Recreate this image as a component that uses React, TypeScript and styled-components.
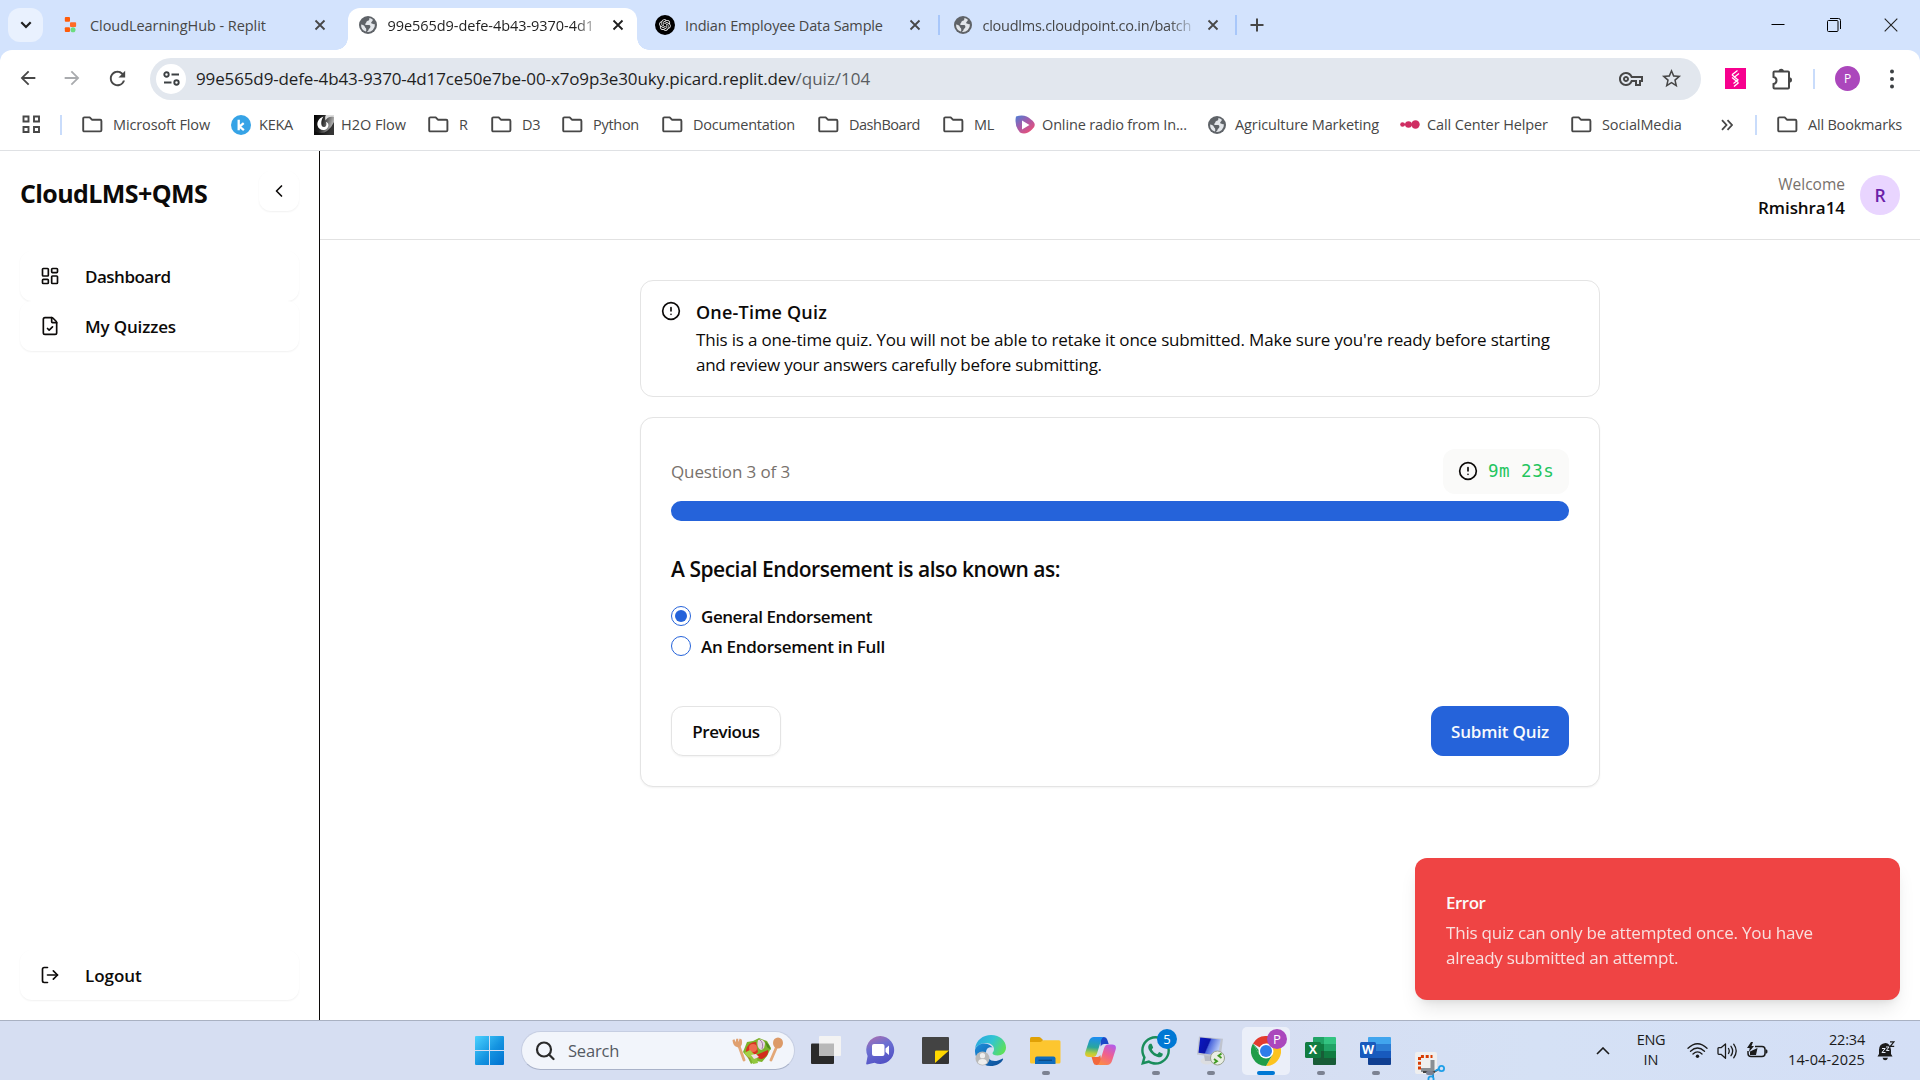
import React from "react";
import styled, { createGlobalStyle, css } from "styled-components";
import { LayoutDashboard, FileCheck, LogOut, ChevronLeft, CircleAlert } from "lucide-react";
import { RiOpenaiFill } from "react-icons/ri";
import { FaWhatsapp } from "react-icons/fa";
import { MdArrowBack, MdArrowForward, MdRefresh, MdOutlineVpnKey, MdStarBorder } from "react-icons/md";

const GlobalStyle = createGlobalStyle`
  *, *::before, *::after { box-sizing: border-box; }
  html, body { margin: 0; padding: 0; }
  body {
    font-family: "Open Sans", "Noto Sans", sans-serif;
    color: #0c0a09;
    background: #fff;
    overflow: hidden;
  }
  svg { display: block; flex: none; }
  button { font: inherit; color: inherit; border: 0; background: none; padding: 0; }
`;

const Screen = styled.div`
  width: 1920px;
  height: 1080px;
  display: flex;
  flex-direction: column;
  overflow: hidden;
`;

const Label = styled.span<{ $track?: number }>`
  white-space: nowrap;
  letter-spacing: ${(p) => p.$track ?? 0}px;
`;

/* ---------- browser chrome ---------- */

const TabStrip = styled.div`
  height: 50px;
  display: flex;
  align-items: flex-start;
  padding: 8px 0 0 8px;
  background: #d3e3fd;
`;

const TabSearch = styled.button`
  width: 35px;
  height: 34px;
  border-radius: 12px;
  background: #e9f1fe;
  display: grid;
  place-items: center;
  margin-right: 7.5px;
`;

const Tab = styled.div<{ $active?: boolean }>`
  position: relative;
  width: 289px;
  height: 42px;
  padding: 0 0 8px 9.5px;
  display: grid;
  grid-template-columns: 20px 211px 15px;
  column-gap: 10px;
  align-items: center;
  font-size: 14.5px;
  color: #474747;
  ${(p) =>
    p.$active &&
    css`
      background: #fff;
      color: #1f1f1f;
      border-radius: 12px 12px 0 0;
      &::before,
      &::after {
        content: "";
        position: absolute;
        bottom: 0;
        width: 12px;
        height: 12px;
      }
      &::before {
        left: -12px;
        background: radial-gradient(circle at 0 0, transparent 11.5px, #fff 12px);
      }
      &::after {
        right: -12px;
        background: radial-gradient(circle at 100% 0, transparent 11.5px, #fff 12px);
      }
    `}
  & > svg {
    justify-self: center;
  }
  & > svg:last-child {
    justify-self: end;
  }
`;

const TabTitle = styled(Label)<{ $fade?: boolean }>`
  overflow: hidden;
  ${(p) => p.$fade && css`mask-image: linear-gradient(90deg, #000 186px, rgba(0, 0, 0, 0.15) 211px);`}
`;

const TabGap = styled.div<{ $bar?: boolean }>`
  width: 8.5px;
  height: 34px;
  display: grid;
  place-items: center;
  &::before {
    content: "";
    width: 2px;
    height: 20px;
    background: ${(p) => (p.$bar ? "#a8c7fa" : "transparent")};
  }
`;

const NewTab = styled.button`
  margin-left: 6.5px;
  width: 20px;
  height: 34px;
  display: grid;
  place-items: center;
`;

const WindowControls = styled.div`
  margin-left: auto;
  height: 34px;
  display: grid;
  grid-template-columns: 57px 56px 58px;
  justify-items: center;
  align-items: center;
`;

const ToolbarBack = styled.div`
  background: #d3e3fd;
`;

const Toolbar = styled.div`
  height: 57px;
  background: #fff;
  border-radius: 12px 12px 0 0;
  display: flex;
  align-items: center;
  padding: 0 18px 0 17px;
  color: #474747;
`;

const NavButtons = styled.div`
  width: 133px;
  display: grid;
  grid-template-columns: 44px 45px 44px;
`;

const AddressBar = styled.div`
  width: 1551px;
  height: 42px;
  border-radius: 21px;
  background: #e2e7ee;
  display: flex;
  align-items: center;
  padding: 0 18px 0 6px;
  font-size: 17px;
  color: #1f1f1f;
  em {
    font-style: normal;
    color: #5a5d61;
    letter-spacing: 0;
  }
`;

const SiteInfo = styled.div`
  width: 30px;
  height: 30px;
  border-radius: 50%;
  background: #fff;
  display: grid;
  place-items: center;
  margin-right: 10px;
`;

const AddressActions = styled.div`
  margin-left: auto;
  display: flex;
  align-items: center;
  gap: 17px;
  color: #474747;
`;

const ExtensionRow = styled.div`
  flex: 1;
  display: flex;
  align-items: center;
  padding-left: 24px;
`;

const ExtensionButton = styled.button`
  margin: 0 20px 0 25px;
`;

const ProfileDot = styled.div`
  width: 25px;
  height: 25px;
  border-radius: 50%;
  background: #ab47bc;
  color: #fff;
  font-size: 12px;
  display: grid;
  place-items: center;
  margin: 0 29px 0 20px;
`;

const VBar = styled.i<{ $ml?: number; $mr?: number }>`
  width: 2px;
  height: 20px;
  background: #c9dcfb;
  margin-left: ${(p) => p.$ml ?? 0}px;
  margin-right: ${(p) => p.$mr ?? 0}px;
`;

const Bookmarks = styled.div`
  height: 44px;
  border-bottom: 1px solid #dfe1e4;
  display: flex;
  align-items: center;
  padding: 0 0 8px 22px;
  font-size: 14.5px;
  color: #474747;
  span {
    position: relative;
    top: -0.5px;
  }
`;

const Bookmark = styled.div<{ $slot: number; $gap?: number }>`
  width: ${(p) => p.$slot}px;
  display: flex;
  align-items: center;
  gap: ${(p) => p.$gap ?? 10}px;
`;

/* ---------- quiz application ---------- */

const AppFrame = styled.div`
  height: 869px;
  display: flex;
`;

const Sidebar = styled.aside`
  width: 320px;
  border-right: 1px solid #0c0a09;
  padding: 20px 20px 20px;
  display: flex;
  flex-direction: column;
`;

const Brand = styled.div`
  display: flex;
  justify-content: space-between;
  height: 40px;
  h1 {
    margin: 5px 0 0;
    font-size: 25px;
    line-height: 34px;
    font-weight: 700;
  }
`;

const ghost = css`
  border-radius: 12px;
  background: #fff;
  box-shadow: 0 1px 2px rgba(0, 0, 0, 0.06);
`;

const Collapse = styled.button`
  ${ghost}
  width: 40px;
  height: 40px;
  display: grid;
  place-items: center;
`;

const Nav = styled.nav`
  margin-top: 40px;
  flex: 1;
`;

const NavItem = styled.button`
  ${ghost}
  width: 279px;
  height: 50px;
  display: flex;
  align-items: center;
  gap: 25px;
  padding: 1px 0 0 20px;
  font-size: 17px;
  font-weight: 600;
  svg {
    margin-bottom: 1px;
  }
`;

const Main = styled.main`
  flex: 1;
  display: flex;
  flex-direction: column;
`;

const Header = styled.header`
  height: 89px;
  border-bottom: 1px solid #e2e2e2;
  display: flex;
  justify-content: flex-end;
  align-items: center;
  gap: 15px;
  padding: 0 20px 0 0;
`;

const Who = styled.div`
  display: flex;
  flex-direction: column;
  align-items: flex-end;
  padding-top: 2px;
  font-size: 17px;
  line-height: 24px;
  font-weight: 600;
  small {
    font-size: 15.5px;
    font-weight: 400;
    color: #78716c;
  }
`;

const Avatar = styled.div`
  width: 40px;
  height: 40px;
  border-radius: 50%;
  background: #e9d5ff;
  color: #6b21a8;
  display: grid;
  place-items: center;
  font-size: 17.5px;
  font-weight: 600;
`;

const Content = styled.section`
  width: 960px;
  margin: 40px 0 0 320px;
  display: flex;
  flex-direction: column;
  gap: 20px;
`;

const card = css`
  border: 1px solid #e4e4e4;
  border-radius: 13px;
  background: #fff;
`;

const Notice = styled.div`
  ${card}
  height: 117px;
  display: flex;
  gap: 15px;
  padding: 20px;
  h5 {
    margin: -1px 0 0;
    font-size: 18px;
    line-height: 24px;
    font-weight: 600;
  }
  p {
    margin: 3px 0 0;
    font-size: 17px;
    line-height: 25px;
  }
`;

const QuizCard = styled.div`
  ${card}
  height: 370px;
  padding: 30px;
  box-shadow: 0 1px 2px rgba(0, 0, 0, 0.05);
  display: flex;
  flex-direction: column;
`;

const ProgressRow = styled.div`
  display: flex;
  justify-content: space-between;
  align-items: center;
  height: 46px;
  font-size: 17px;
  color: #78716c;
`;

const Timer = styled.div`
  width: 126px;
  height: 45px;
  border-radius: 12px;
  background: #fafaf9;
  display: flex;
  align-items: center;
  gap: 10px;
  padding-left: 15px;
  color: #0c0a09;
  font-size: 17.5px;
  span {
    font-family: "DejaVu Sans Mono", monospace;
    color: #22c55e;
  }
`;

const ProgressBar = styled.div`
  margin-top: 7px;
  height: 20px;
  border-radius: 10px;
  background: #2563da;
`;

const Question = styled.h3`
  margin: 32px 0 0;
  font-size: 21px;
  line-height: 32px;
  font-weight: 600;
`;

const Options = styled.div`
  margin-top: 21px;
  display: grid;
  gap: 10px;
`;

const Option = styled.label`
  height: 20px;
  display: flex;
  align-items: center;
  gap: 10px;
  font-size: 17px;
  line-height: 20px;
  font-weight: 600;
  span {
    padding-top: 1px;
  }
`;

const Radio = styled.i<{ $on?: boolean }>`
  width: 20px;
  height: 20px;
  border-radius: 50%;
  border: 1px solid #2563da;
  display: grid;
  place-items: center;
  &::before {
    content: "";
    width: 12px;
    height: 12px;
    border-radius: 50%;
    background: ${(p) => (p.$on ? "#2563da" : "transparent")};
  }
`;

const Actions = styled.div`
  margin-top: 50px;
  display: flex;
  justify-content: space-between;
`;

const Button = styled.button<{ $primary?: boolean }>`
  width: ${(p) => (p.$primary ? 138 : 110)}px;
  height: 50px;
  border-radius: 12px;
  font-size: 17px;
  font-weight: 600;
  border: 1px solid ${(p) => (p.$primary ? "#2563da" : "#e4e4e4")};
  background: ${(p) => (p.$primary ? "#2563da" : "#fff")};
  color: ${(p) => (p.$primary ? "#f8fafc" : "#0c0a09")};
  box-shadow: ${(p) => (p.$primary ? "none" : "0 1px 2px rgba(0,0,0,.05)")};
`;

const Toast = styled.div`
  position: absolute;
  left: 1415px;
  top: 858px;
  width: 485px;
  height: 142px;
  border-radius: 12px;
  background: #ef4444;
  color: #fafaf9;
  padding: 32px 31px;
  font-size: 17px;
  box-shadow: 0 12px 19px -4px rgba(0, 0, 0, 0.1), 0 5px 8px -5px rgba(0, 0, 0, 0.1);
  strong {
    display: block;
    font-weight: 600;
    line-height: 25px;
  }
  p {
    margin: 5px 0 0;
    line-height: 25px;
    opacity: 0.86;
  }
`;

/* ---------- taskbar ---------- */

const Taskbar = styled.footer`
  position: relative;
  height: 60px;
  border-top: 1px solid #a9b1c2;
  background: linear-gradient(90deg, #d6def2, #d6def2 65%, #d5e1f5 80%, #d4dff6);
  display: flex;
  align-items: center;
  padding-left: 475px;
`;

const SearchBox = styled.div`
  margin: 0 3px 0 17px;
  width: 274px;
  height: 39px;
  border-radius: 20px;
  background: #f2f5fb;
  border: 1px solid #c6cee2;
  border-bottom-color: #a9b2c9;
  display: flex;
  align-items: center;
  padding: 0 10px 0 13px;
  font-size: 16.5px;
  color: #555a63;
  gap: 13px;
  svg:last-child {
    margin-left: auto;
  }
`;

const TaskSlot = styled.div<{ $state?: "open" | "active" }>`
  position: relative;
  width: 55px;
  height: 59px;
  display: grid;
  place-items: center;
  ${(p) =>
    p.$state === "active" &&
    css`
      &::before {
        content: "";
        grid-area: 1 / 1;
        width: 48px;
        height: 48px;
        border-radius: 5px;
        background: #ebeff9;
      }
    `}
  & > svg {
    grid-area: 1 / 1;
  }
  &::after {
    content: "";
    display: ${(p) => (p.$state ? "block" : "none")};
    position: absolute;
    bottom: 5px;
    width: ${(p) => (p.$state === "active" ? 18 : 8)}px;
    height: 4px;
    border-radius: 2px;
    background: ${(p) => (p.$state === "active" ? "#0078d4" : "#7c8292")};
  }
`;

const Badge = styled.b<{ $bg: string }>`
  position: absolute;
  left: 29px;
  top: 8px;
  width: 20px;
  height: 20px;
  border-radius: 50%;
  background: ${(p) => p.$bg};
  color: #fff;
  font-size: 13px;
  font-weight: 400;
  display: grid;
  place-items: center;
`;

const Tray = styled.div`
  margin-left: auto;
  display: flex;
  align-items: center;
  padding-right: 25px;
  font-size: 14.5px;
  line-height: 20px;
  color: #1b1b1b;
`;

const TrayText = styled.div<{ $w: number; $align: string }>`
  width: ${(p) => p.$w}px;
  display: flex;
  flex-direction: column;
  align-items: ${(p) => p.$align};
  padding-bottom: 1px;
`;

const LanguageSlot = styled.div`
  margin-left: 27px;
`;

const BellSlot = styled.div`
  margin-left: 12px;
`;

const TrayIcons = styled.div`
  display: flex;
  align-items: center;
  gap: 9px;
  margin: 0 19px 0 22px;
`;

/* ---------- drawings ---------- */

const Cross = ({ c = "#474747" }: { c?: string }) => (
  <svg width="12" height="12" viewBox="0 0 12 12" stroke={c} strokeWidth="1.8">
    <path d="M1.5 1.5l9 9M10.5 1.5l-9 9" />
  </svg>
);

const Globe = () => (
  <svg width="18" height="18" viewBox="0 0 18 18">
    <circle cx="9" cy="9" r="9" fill="#5f6368" />
    <path
      d="M10.6 1.9C9.7 2.9 10.9 3.6 9.6 4.4 8.4 5 7.3 5 7.2 6.4 7.2 7.4 6 7.2 6 8.2c0 1 2.6.6 4 .7 1.6.2 1.5 1.6 1.3 2.3-.3 1.1-1.5 1.2-1.7 2.4-.1 1-.7 1.5-1.6 2.3A7 7 0 0 0 15.9 8.3c-1.2.3-1.6-.5-2.6-.5-1.100 0-1.500-1.500-.6-2 .8-.5.8-1.500 1.400-1.700A7 7 0 0 0 10.600 1.900z"
      fill="#e3e6ea"
    />
    <path d="M2.100 8.500c1.700.3 3.300.9 3.700 2.200.4 1.100 1.500 1.200 1.400 2.500 0 1 .2 1.800-.3 2.400A7 7 0 0 1 2.100 8.500z" fill="#e3e6ea" />
  </svg>
);

const Folder = () => (
  <svg width="21" height="17" viewBox="0 0 21 17" fill="none" stroke="#474747" strokeWidth="1.9" strokeLinejoin="round">
    <path d="M1.2 2.6q0-1.2 1.2-1.2h5.3l2.2 2.3h8.3q1.2 0 1.2 1.2v9.3q0 1.2-1.2 1.2H2.4q-1.2 0-1.2-1.2z" />
  </svg>
);

const ReplitMark = () => (
  <svg width="14" height="16" viewBox="-1 0 14 17">
    <rect x="0.500" y="0" width="5.500" height="5" rx="1" fill="#ff5c0a" />
    <rect x="6" y="5.500" width="6.500" height="5" rx="1" fill="#ff6a26" />
    <rect x="0.500" y="11" width="5.500" height="5" rx="1" fill="#ff5c0a" />
    <circle cx="9.200" cy="13.600" r="2.700" fill="#6bdc80" />
  </svg>
);

const AppsGrid = () => (
  <svg width="19" height="19" viewBox="0 0 19 19" fill="none" stroke="#474747" strokeWidth="1.9">
    <path d="M1.500 1.500h5v5h-5zM12 1.500h5v5h-5zM1.500 12h5v5h-5zM12 12h5v5h-5z" />
  </svg>
);

const Keka = () => (
  <svg width="20" height="20" viewBox="0 0 20 20">
    <circle cx="10" cy="10" r="10" fill="#36a3e6" />
    <path d="M7.700 4.800v10.400M12.700 8.200L8.500 11.600l4.400 3.600" stroke="#fff" strokeWidth="2.300" fill="none" />
  </svg>
);

const H2O = () => (
  <svg width="20" height="20" viewBox="0 0 20 20">
    <defs>
      <linearGradient id="h2o" x1="0" x2="1" y2=".3">
        <stop offset="0" />
        <stop offset=".45" stopColor="#222" />
        <stop offset="1" stopColor="#b5b5b5" />
      </linearGradient>
    </defs>
    <rect width="20" height="20" fill="url(#h2o)" />
    <path d="M9.500 1.500C5 3 2.800 7 3.500 10.500 4.500 15 10 16.500 13 13.500c2.500-2.500 1.500-6-1-6.500 1 3 0 5-2.200 5C6.500 12 6.500 5.500 9.500 1.500z" fill="#fff" />
    <path d="M12 0h8v2C15.500 1 13 3 11.500 5.500 11 3 11 1 12 0z" fill="#ddd" />
    <path d="M0 16q8 4 13 0 5-4 7-9v13H0z" fill="#0b0b0b" opacity=".75" />
  </svg>
);

const Radioline = () => (
  <svg width="20" height="20" viewBox="0 0 20 19">
    <defs>
      <linearGradient id="rad" x1="0" y1="0" x2=".8" y2="1">
        <stop offset="0" stopColor="#4b7fd6" />
        <stop offset=".5" stopColor="#a85aa8" />
        <stop offset="1" stopColor="#f04f72" />
      </linearGradient>
    </defs>
    <path d="M1 1q9-3 15 3 7 5 1 10-6 6-12 3Q-1 10 1 1z" fill="url(#rad)" />
    <path d="M7 5l7.500 4.500L7 14z" fill="#fff" />
  </svg>
);

const Beads = () => (
  <svg width="20" height="9" viewBox="0 0 20 9" fill="#cf2e63">
    <circle cx="2.500" cy="4.500" r="2.300" />
    <circle cx="8.500" cy="4.500" r="3.300" />
    <circle cx="15.500" cy="4.500" r="4.200" />
    <path d="M2 3.500h12v2H2z" />
  </svg>
);

const WindowsLogo = () => (
  <svg width="29" height="29" viewBox="0 0 29 29">
    <defs>
      <linearGradient id="win" x1="0" y1="0" x2="1" y2="1">
        <stop offset="0" stopColor="#4cd2ff" />
        <stop offset=".55" stopColor="#1493e0" />
        <stop offset="1" stopColor="#0070d0" />
      </linearGradient>
    </defs>
    <path d="M1 0h13v14H0V1q0-1 1-1zM15 0h13q1 0 1 1v13H15zM0 15h14v14H1q-1 0-1-1zM15 15h14v13q0 1-1 1H15z" fill="url(#win)" />
  </svg>
);

const Salad = () => (
  <svg width="52" height="28" viewBox="0 0 52 28">
    <g stroke="#e3a878" strokeWidth="2.800" strokeLinecap="round" fill="none">
      <path d="M7 9l5 14M45 9l-6 14" />
    </g>
    <ellipse cx="46" cy="6" rx="5" ry="5.500" fill="#dc9a68" />
    <path d="M.5 3l2-.8 1 3 .8-3.400h2L6.200 5l1.500-3.500 2 .9c1 4 0 7-2.700 8C3 10 1 8 .5 3z" fill="#e0a070" />
    <path d="M11 15l4-10 6-1 6-3 8 3 4 7-4 8-5 6-6-1-5 3-3-6z" fill="#7db32c" />
    <path d="M14 13q2-8 10-8l2 10-8 7q-4-3-4-9z" fill="#d8321f" />
    <circle cx="21" cy="11" r="4" fill="#ee6a4e" />
    <path d="M24 18l12-5q1 6-6 9-5 0-6-4z" fill="#d22c1c" />
    <path d="M26 3q5-2 7 3 0 6-4 7-5-3-3-10z" fill="#e5d3e2" />
    <path d="M28 3q4 3 2 9" stroke="#a278a3" fill="none" />
    <path d="M12 16l6-3 5 5-2 5-5-3z" fill="#a5cf45" />
    <path d="M18 20l6-3 2 9-5 1z" fill="#92c83e" />
    <path d="M33 4l4 4 2 5-4-3z" fill="#4d8a1f" />
    <path d="M19 18l5-1 3 3-5 2z" fill="#f1dfe6" />
  </svg>
);

const TaskView = () => (
  <svg width="30" height="29" viewBox="0 0 30 29">
    <rect x="0" y="7.500" width="23" height="20.500" rx="1" fill="#2a2a2a" />
    <rect x="8" y="0" width="22" height="20" rx="1" fill="#f3f3f3" />
    <path d="M8 7.500h15v12.500H8z" fill="#b8b8b8" />
  </svg>
);

const ChatIcon = () => (
  <svg width="29" height="29" viewBox="0 0 29 29">
    <defs>
      <linearGradient id="chat" x1=".2" y1="0" x2=".6" y2="1">
        <stop offset="0" stopColor="#a96fb0" />
        <stop offset=".4" stopColor="#6b6fd2" />
        <stop offset="1" stopColor="#5150c4" />
      </linearGradient>
    </defs>
    <path d="M14.500 0a14 14 0 1 1-6 26.800L1 28.500q-1 0-.8-1L1.600 20A14 14 0 0 1 14.500 0z" fill="url(#chat)" />
    <rect x="6" y="8" width="12.500" height="12" rx="2" fill="#fff" />
    <path d="M19.500 12.500l3.500-3v9.500l-3.500-3z" fill="#fff" />
  </svg>
);

const StickyIcon = () => (
  <svg width="27" height="27" viewBox="0 0 27 27">
    <path d="M1 0h25q1 0 1 1v12L13 27H1q-1 0-1-1V1q0-1 1-1z" fill="#434343" />
    <path d="M13 13h14v13q0 1-1 1H13z" fill="#333" />
    <path d="M13 14.500q0-1 1-1h13L13 26z" fill="#ffd800" />
  </svg>
);

const EdgeIcon = () => (
  <svg width="31" height="31" viewBox="0 0 31 31">
    <defs>
      <linearGradient id="edgeTop" x1="0" y1=".2" x2="1" y2=".6">
        <stop offset="0" stopColor="#2aa6e0" />
        <stop offset=".5" stopColor="#31c4d3" />
        <stop offset="1" stopColor="#5ee05a" />
      </linearGradient>
      <linearGradient id="edgeLow" x1="0" y1="0" x2="1" y2="1">
        <stop offset="0" stopColor="#1d8fdc" />
        <stop offset="1" stopColor="#0c4a94" />
      </linearGradient>
    </defs>
    <path d="M0 14C1 5 8 0 16 0c9 0 15 6 15 12.500 0 5-4 8-8.500 8-3.500 0-5-1.300-5-2.300 0-.8 1.500-1.500 1.500-4.200 0-3-3-6-8-6S1 11 0 14z" fill="url(#edgeTop)" />
    <path d="M0 15C1 11 5 8.500 9 8.500c4 0 7 1.800 8.500 4-4-1-6.500 1.500-6.500 5 0 6 6 10 12 8 2-.6 3.500-1.500 4.500-2 .6 0 .8.400.5 1C26 28.500 21.500 31 15.500 31 6.500 31-.5 24 0 15z" fill="url(#edgeLow)" />
    <circle cx="7.500" cy="23.500" r="7" fill="#b9b9b9" />
    <circle cx="7.500" cy="20.700" r="2.600" fill="#eee" />
    <path d="M3 28q0-4 4.500-4t4.500 4q-4.500 3.500-9 0z" fill="#eee" />
  </svg>
);

const ExplorerIcon = () => (
  <svg width="31" height="27" viewBox="0 0 31 27">
    <path d="M0 1.500Q0 0 1.500 0H9q1 0 2 1l2 2-2 4H0z" fill="#e0a106" />
    <path d="M0 5h10.500l3-1.800H29q1.500 0 1.500 1.500V25q0 1.500-1.500 1.500H1.500Q0 26.500 0 25z" fill="#fdc62f" />
    <path d="M5 27v-5.500q0-2 2-2h16.500q2 0 2 2V27z" fill="#0f6cbd" />
    <path d="M8.500 23.300h13.500" stroke="#0b4c87" strokeWidth="1.400" />
  </svg>
);

const CopilotIcon = () => (
  <svg width="31" height="28" viewBox="0 0 31 28">
    <defs>
      <linearGradient id="copA" x1=".3" y1="0" x2=".2" y2="1">
        <stop offset="0" stopColor="#1c8df0" />
        <stop offset=".5" stopColor="#2aa69c" />
        <stop offset=".8" stopColor="#b5cf3c" />
        <stop offset="1" stopColor="#f5c22b" />
      </linearGradient>
      <linearGradient id="copB" x1=".8" y1="0" x2=".3" y2="1">
        <stop offset="0" stopColor="#b45bea" />
        <stop offset=".5" stopColor="#f0608e" />
        <stop offset="1" stopColor="#fb8a4a" />
      </linearGradient>
    </defs>
    <path d="M15 0h4q2.500 0 3.300 2.700L23.700 7H19q-2.500 0-3.300 2.500z" fill="#1a49c8" />
    <path d="M9 0h10q-2 .5-2.800 3L12 16.500Q10.800 20 8 20H4q-5 0-3.600-5L4 4Q5.500 0 9 0z" fill="url(#copA)" />
    <path d="M8 20h4.500q2 0 2.800-2l1.200 7.300q-1 2.700-4 2.700h-1.200Q9 28 8.200 25.500L6.600 20z" fill="#f2683c" />
    <path d="M22 28H12q2-.5 2.800-3L19 11.500Q20.200 7.500 23 7.500h4q5 0 3.600 5.200L27 24q-1.500 4-5 4z" fill="url(#copB)" />
  </svg>
);

const RdpIcon = () => (
  <svg width="30" height="31" viewBox="0 0 30 31">
    <defs>
      <linearGradient id="rdp" x1="0" y1="0" x2="1" y2=".35">
        <stop offset="0" stopColor="#0a18c4" />
        <stop offset=".5" stopColor="#0a13a8" />
        <stop offset=".56" stopColor="#4a66dc" />
        <stop offset="1" stopColor="#b5c8f8" />
      </linearGradient>
    </defs>
    <ellipse cx="11" cy="26" rx="6.500" ry="3.500" fill="#dcdde0" />
    <path d="M8 20h8l-1 6H9z" fill="#b7bac4" />
    <path d="M3 1.500l24 2.200L24.500 23 1 19.500z" fill="#bfc3ce" />
    <path d="M4.200 2.500l20.500 2-2.500 16L2.500 17.800z" fill="url(#rdp)" />
    <circle cx="21.500" cy="23" r="7" fill="#e9eee4" stroke="#9aa391" />
    <path d="M18 24l3 2.200-3 2M25.500 18.500l-3 2.200 3 2.200" stroke="#3f9b23" strokeWidth="1.800" fill="none" />
  </svg>
);

const ChromeIcon = () => (
  <svg width="30" height="30" viewBox="0 0 48 48">
    <path d="M24 24L3.200 12A24 24 0 0 1 44.800 12z" fill="#e33b2e" />
    <path d="M24 24V12h20.800A24 24 0 0 1 24 48L34.400 30z" fill="#fcc31e" />
    <path d="M34.400 30L24 48A24 24 0 0 1 3.200 12L13.600 30z" fill="#1f9d49" />
    <path d="M3.200 12L13.600 30 20 30 12 22z" fill="#1f9d49" />
    <path d="M13.600 30L24 36 34.400 30 24 24z" fill="#1f9d49" />
    <circle cx="24" cy="24" r="12" fill="#fff" />
    <circle cx="24" cy="24" r="9.600" fill="#2f7de9" />
  </svg>
);

const OfficeTile = styled.div<{ $c: string }>`
  position: absolute;
  left: 12px;
  top: 21px;
  width: 16px;
  height: 16px;
  border-radius: 1.5px;
  background: ${(p) => p.$c};
  color: #fff;
  font-size: 12.5px;
  line-height: 16px;
  font-weight: 700;
  text-align: center;
`;

const ExcelSheet = () => (
  <svg width="30" height="28" viewBox="0 0 30 28">
    <path d="M7 1q0-1 1-1h10v7H7z" fill="#21a366" />
    <path d="M18 0h11q1 0 1 1v6H18z" fill="#33c481" />
    <path d="M7 7h11v7H7z" fill="#107c41" />
    <path d="M18 7h12v7H18z" fill="#21a366" />
    <path d="M7 14h11v7H7z" fill="#185c37" />
    <path d="M18 14h12v7H18z" fill="#107c41" />
    <path d="M7 21h23v6q0 1-1 1H8q-1 0-1-1z" fill="#185c37" />
  </svg>
);

const WordSheet = () => (
  <svg width="30" height="28" viewBox="0 0 30 28">
    <path d="M7 1q0-1 1-1h21q1 0 1 1v6H7z" fill="#41a5ee" />
    <path d="M7 7h23v7H7z" fill="#2b7cd3" />
    <path d="M7 14h23v7H7z" fill="#185abd" />
    <path d="M7 21h23v6q0 1-1 1H8q-1 0-1-1z" fill="#103f91" />
  </svg>
);

const SnipIcon = () => (
  <svg width="31" height="28" viewBox="0 0 31 28">
    <rect width="22" height="22" rx="2" fill="#efefef" />
    <path d="M4.500 17.500V4.500h13" stroke="#d83b01" strokeWidth="3" strokeDasharray="3 1.800" fill="none" />
    <path d="M17.500 8v10H6" stroke="#8a8f94" strokeWidth="4" fill="none" />
    <path d="M8 20h11l5-3M18 22v3" stroke="#444" strokeWidth="2" fill="none" />
    <circle cx="26.500" cy="16.500" r="2.600" fill="none" stroke="#1f9fe8" strokeWidth="1.800" />
    <circle cx="16" cy="27" r="2.600" fill="none" stroke="#1f9fe8" strokeWidth="1.800" />
    <path d="M24 17l-4 2M17.500 25l1-4" stroke="#1f9fe8" strokeWidth="1.800" />
  </svg>
);

const SnipSlot = styled(TaskSlot)`
  padding-top: 31px;
  place-items: start center;
  &::after {
    bottom: 5px;
    left: 23px;
  }
`;

const WifiIcon = () => (
  <svg width="21" height="17" viewBox="0 0 21 17" fill="none" stroke="#1b1b1b" strokeWidth="1.300" strokeLinecap="round">
    <path d="M1 6.300Q10.500-2.800 20 6.300M3.500 9.200q7-6.500 14 0M6 12q4.500-4.200 9 0" />
    <circle cx="10.500" cy="14.300" r="1.700" fill="#1b1b1b" stroke="none" />
  </svg>
);

const SoundIcon = () => (
  <svg width="21" height="18" viewBox="0 0 21 18" fill="none" stroke="#1b1b1b" strokeWidth="1.300" strokeLinecap="round" strokeLinejoin="round">
    <path d="M1 6.500v5q0 .8.800.8H4l4.500 4V2L4 5.700H1.800q-.8 0-.8.800zM11.500 6.500q1.500 2.500 0 5M14 4.300q3.300 4.700 0 9.400M16.700 2.200q5 6.800 0 13.600" />
  </svg>
);

const BatteryIcon = () => (
  <svg width="21" height="18" viewBox="0 0 21 18">
    <path d="M8 4.500h7q3 0 3 3v4q0 3-3 3H4q-3 0-3-3V9" fill="none" stroke="#1b1b1b" strokeWidth="1.500" />
    <path d="M3 13V9.500l7.500-3.500-1.500 7z" fill="#1b1b1b" />
    <path d="M4 0L0 6h2.700L2 10l5-6H4.500L6 0zM18.500 7.500h1q1 0 1 2t-1 2h-1z" fill="#1b1b1b" />
  </svg>
);

const BellIcon = () => (
  <svg width="18" height="20" viewBox="0 0 18 20">
    <path d="M8.500 2Q2 2.500 2 9v4l-1.500 2.500h15L14 13V9Q13 2 8.500 2zM5.500 16.800h5.500q-.8 2.500-2.800 2.500t-2.700-2.500z" fill="#1b1b1b" />
    <path d="M5 7.500h3.200L5 11.500h3.500M9 6h3L9.300 9.500h3" stroke="#e4ebf8" strokeWidth="1" fill="none" />
    <path d="M13 .8h4L13.200 5.300h4" stroke="#1b1b1b" strokeWidth="1.300" fill="none" />
  </svg>
);

type BookmarkData = { name: string; slot: number; track?: number; gap?: number; icon?: React.ReactNode };

const bookmarks: BookmarkData[] = [
  { name: "Microsoft Flow", slot: 149, track: -0.13 },
  { name: "KEKA", slot: 83, track: -0.25, icon: <Keka />, gap: 8 },
  { name: "H2O Flow", slot: 114, track: -0.02, icon: <H2O />, gap: 7 },
  { name: "R", slot: 63 },
  { name: "D3", slot: 71, track: -0.35 },
  { name: "Python", slot: 100, track: -0.28 },
  { name: "Documentation", slot: 156, track: -0.25 },
  { name: "DashBoard", slot: 125, track: -0.48 },
  { name: "ML", slot: 72, track: -0.3 },
  { name: "Online radio from In...", slot: 193, track: -0.15, icon: <Radioline />, gap: 7 },
  { name: "Agriculture Marketing", slot: 192, track: -0.11, icon: <Globe />, gap: 9 },
  { name: "Call Center Helper", slot: 171, track: -0.11, icon: <Beads />, gap: 7 },
  { name: "SocialMedia", slot: 150, track: -0.1 },
];

export default function App() {
  return (
    <Screen>
      <GlobalStyle />
      <TabStrip>
        <TabSearch>
          <svg width="12" height="8" viewBox="0 0 12 8" fill="none" stroke="#1f1f1f" strokeWidth="2.200">
            <path d="M1.300 1.300L6 6l4.700-4.700" />
          </svg>
        </TabSearch>
        <Tab>
          <ReplitMark />
          <TabTitle $track={-0.06}>CloudLearningHub - Replit</TabTitle>
          <Cross />
        </Tab>
        <TabGap />
        <Tab $active>
          <Globe />
          <TabTitle $fade $track={-0.05}>99e565d9-defe-4b43-9370-4d1</TabTitle>
          <Cross c="#1f1f1f" />
        </Tab>
        <TabGap />
        <Tab>
          <svg width="20" height="20" viewBox="0 0 20 20">
            <circle cx="10" cy="10" r="10" fill="#000" />
            <RiOpenaiFill x="3" y="3" width="14" height="14" size={14} color="#fff" />
          </svg>
          <TabTitle $track={-0.15}>Indian Employee Data Sample</TabTitle>
          <Cross />
        </Tab>
        <TabGap $bar />
        <Tab>
          <Globe />
          <TabTitle $fade $track={-0.25}>cloudlms.cloudpoint.co.in/batch</TabTitle>
          <Cross />
        </Tab>
        <TabGap $bar />
        <NewTab>
          <svg width="14" height="14" viewBox="0 0 14 14" stroke="#474747" strokeWidth="2">
            <path d="M7 .500v13M.500 7h13" />
          </svg>
        </NewTab>
        <WindowControls>
          <svg width="14" height="14" viewBox="0 0 14 14" stroke="#000" strokeWidth="1">
            <path d="M.500 6.500h13" />
          </svg>
          <svg width="14" height="14" viewBox="0 0 14 14" stroke="#000" fill="none">
            <rect x=".5" y="2.500" width="10.500" height="11" rx="1" />
            <path d="M3 .500h8.500q2 0 2 2v8.500" />
          </svg>
          <svg width="14" height="14" viewBox="0 0 14 14" stroke="#222" strokeWidth="1.100">
            <path d="M.700.700l12.600 12.600M13.300.700L.700 13.300" />
          </svg>
        </WindowControls>
      </TabStrip>

      <ToolbarBack>
        <Toolbar>
          <NavButtons>
            <MdArrowBack size={22} />
            <MdArrowForward size={22} color="#a9abae" />
            <MdRefresh size={23} />
          </NavButtons>
          <AddressBar>
            <SiteInfo>
              <svg width="17" height="15" viewBox="0 0 17 15" fill="none" stroke="#3c4043" strokeWidth="1.900">
                <circle cx="3.500" cy="3.500" r="2.200" />
                <path d="M8.500 3.500H16M1 11.500h7.500" />
                <circle cx="13.500" cy="11.500" r="2.200" />
              </svg>
            </SiteInfo>
            <Label $track={-0.13}>
              99e565d9-defe-4b43-9370-4d17ce50e7be-00-x7o9p3e30uky.picard.replit.dev<em>/quiz/104</em>
            </Label>
            <AddressActions>
              <MdOutlineVpnKey size={24} />
              <MdStarBorder size={23} />
            </AddressActions>
          </AddressBar>
          <ExtensionRow>
            <svg width="21" height="21" viewBox="0 0 21 21">
              <rect width="21" height="21" fill="#f7008e" />
              <path
                d="M12.500 2.500L7 6.800M14 5.500L9 9.500M7 6.800L13 12M7 9.500L13.500 14.800M13.500 11.500L8.500 15.500M13.500 14.800L9 18.500"
                stroke="#fff"
                strokeWidth="1.300"
                fill="none"
              />
            </svg>
            <ExtensionButton>
              <svg width="22" height="22" viewBox="0 0 22 22">
                <path d="M2.500 4.500q0-1 1-1h13.500q1 0 1 1v15q0 1-1 1H3.500q-1 0-1-1V16q3-.5 3-3.500t-3-3.500z" fill="none" stroke="#474747" strokeWidth="2" />
                <path d="M7.500 3.500q0-2.800 2.700-2.800t2.700 2.800zM18 9.300q3 0 3 2.700t-3 2.700z" fill="#474747" />
              </svg>
            </ExtensionButton>
            <VBar />
            <ProfileDot>P</ProfileDot>
            <svg width="6" height="22" viewBox="0 0 6 22" fill="#3c4043">
              <circle cx="3" cy="3.500" r="2" />
              <circle cx="3" cy="11" r="2" />
              <circle cx="3" cy="18.500" r="2" />
            </svg>
          </ExtensionRow>
        </Toolbar>
      </ToolbarBack>

      <Bookmarks>
        <AppsGrid />
        <VBar $ml={19} $mr={20} />
        {bookmarks.map((b) => (
          <Bookmark key={b.name} $slot={b.slot} $gap={b.gap}>
            {b.icon ?? <Folder />}
            <Label $track={b.track}>{b.name}</Label>
          </Bookmark>
        ))}
        <svg width="12" height="12" viewBox="0 0 12 12" fill="none" stroke="#474747" strokeWidth="1.800">
          <path d="M1 1.200L5.500 6 1 10.800M6.500 1.200L11 6l-4.500 4.800" />
        </svg>
        <VBar $ml={22} $mr={20} />
        <Bookmark $slot={125}>
          <Folder />
          <Label $track={-0.2}>All Bookmarks</Label>
        </Bookmark>
      </Bookmarks>

      <AppFrame>
        <Sidebar>
          <Brand>
            <h1>
              <Label $track={-0.6}>CloudLMS+QMS</Label>
            </h1>
            <Collapse>
              <ChevronLeft size={20} strokeWidth={2} />
            </Collapse>
          </Brand>
          <Nav>
            <NavItem>
              <LayoutDashboard size={20} />
              <Label $track={-0.5}>Dashboard</Label>
            </NavItem>
            <NavItem>
              <FileCheck size={20} />
              <Label $track={-0.15}>My Quizzes</Label>
            </NavItem>
          </Nav>
          <NavItem>
            <LogOut size={20} />
            <Label $track={-0.05}>Logout</Label>
          </NavItem>
        </Sidebar>
        <Main>
          <Header>
            <Who>
              <small>Welcome</small>
              <Label $track={-0.06}>Rmishra14</Label>
            </Who>
            <Avatar>R</Avatar>
          </Header>
          <Content>
            <Notice>
              <CircleAlert size={20} />
              <div>
                <h5>
                  <Label $track={0.2}>One-Time Quiz</Label>
                </h5>
                <p>
                  <Label $track={-0.18}>
                    This is a one-time quiz. You will not be able to retake it once submitted. Make sure you're ready before starting
                  </Label>
                  <br />
                  <Label $track={-0.27}>and review your answers carefully before submitting.</Label>
                </p>
              </div>
            </Notice>
            <QuizCard>
              <ProgressRow>
                <Label $track={-0.13}>Question 3 of 3</Label>
                <Timer>
                  <CircleAlert size={20} />
                  <Label $track={0.5}>9m 23s</Label>
                </Timer>
              </ProgressRow>
              <ProgressBar />
              <Question>
                <Label $track={-0.48}>A Special Endorsement is also known as:</Label>
              </Question>
              <Options>
                <Option>
                  <Radio $on />
                  <Label $track={-0.44}>General Endorsement</Label>
                </Option>
                <Option>
                  <Radio />
                  <Label $track={-0.29}>An Endorsement in Full</Label>
                </Option>
              </Options>
              <Actions>
                <Button>
                  <Label $track={-0.45}>Previous</Label>
                </Button>
                <Button $primary>
                  <Label $track={-0.17}>Submit Quiz</Label>
                </Button>
              </Actions>
            </QuizCard>
          </Content>
        </Main>
      </AppFrame>

      <Toast>
        <strong>
          <Label $track={-0.5}>Error</Label>
        </strong>
        <p>
          <Label $track={-0.2}>This quiz can only be attempted once. You have</Label>
          <br />
          <Label $track={-0.29}>already submitted an attempt.</Label>
        </p>
      </Toast>

      <Taskbar>
        <WindowsLogo />
        <SearchBox>
          <svg width="20" height="20" viewBox="0 0 20 20" fill="none" stroke="#2b2b2b" strokeWidth="2.200" strokeLinecap="round">
            <circle cx="9" cy="8.500" r="7" />
            <path d="M14 13.500l4.500 4.500" />
          </svg>
          <Label $track={-0.2}>Search</Label>
          <Salad />
        </SearchBox>
        <TaskSlot><TaskView /></TaskSlot>
        <TaskSlot><ChatIcon /></TaskSlot>
        <TaskSlot><StickyIcon /></TaskSlot>
        <TaskSlot><EdgeIcon /></TaskSlot>
        <TaskSlot $state="open"><ExplorerIcon /></TaskSlot>
        <TaskSlot><CopilotIcon /></TaskSlot>
        <TaskSlot $state="open">
          <FaWhatsapp size={33} color="#1a8d5b" />
          <Badge $bg="#0078d4">5</Badge>
        </TaskSlot>
        <TaskSlot $state="open"><RdpIcon /></TaskSlot>
        <TaskSlot $state="active">
          <ChromeIcon />
          <Badge $bg="#ab47bc">P</Badge>
        </TaskSlot>
        <TaskSlot $state="open">
          <ExcelSheet />
          <OfficeTile $c="#107c41">X</OfficeTile>
        </TaskSlot>
        <TaskSlot $state="open">
          <WordSheet />
          <OfficeTile $c="#185abd">W</OfficeTile>
        </TaskSlot>
        <SnipSlot $state="open"><SnipIcon /></SnipSlot>
        <Tray>
          <svg width="14" height="8" viewBox="0 0 14 8" fill="none" stroke="#1b1b1b" strokeWidth="1.600">
            <path d="M1 7l6-6 6 6" />
          </svg>
          <LanguageSlot>
            <TrayText $w={28} $align="center">
              <Label $track={-0.4}>ENG</Label>
              <Label>IN</Label>
            </TrayText>
          </LanguageSlot>
          <TrayIcons>
            <WifiIcon />
            <SoundIcon />
            <BatteryIcon />
          </TrayIcons>
          <TrayText $w={78} $align="flex-end">
            <Label $track={-0.2}>22:34</Label>
            <Label $track={0.13}>14-04-2025</Label>
          </TrayText>
          <BellSlot>
            <BellIcon />
          </BellSlot>
        </Tray>
      </Taskbar>
    </Screen>
  );
}
